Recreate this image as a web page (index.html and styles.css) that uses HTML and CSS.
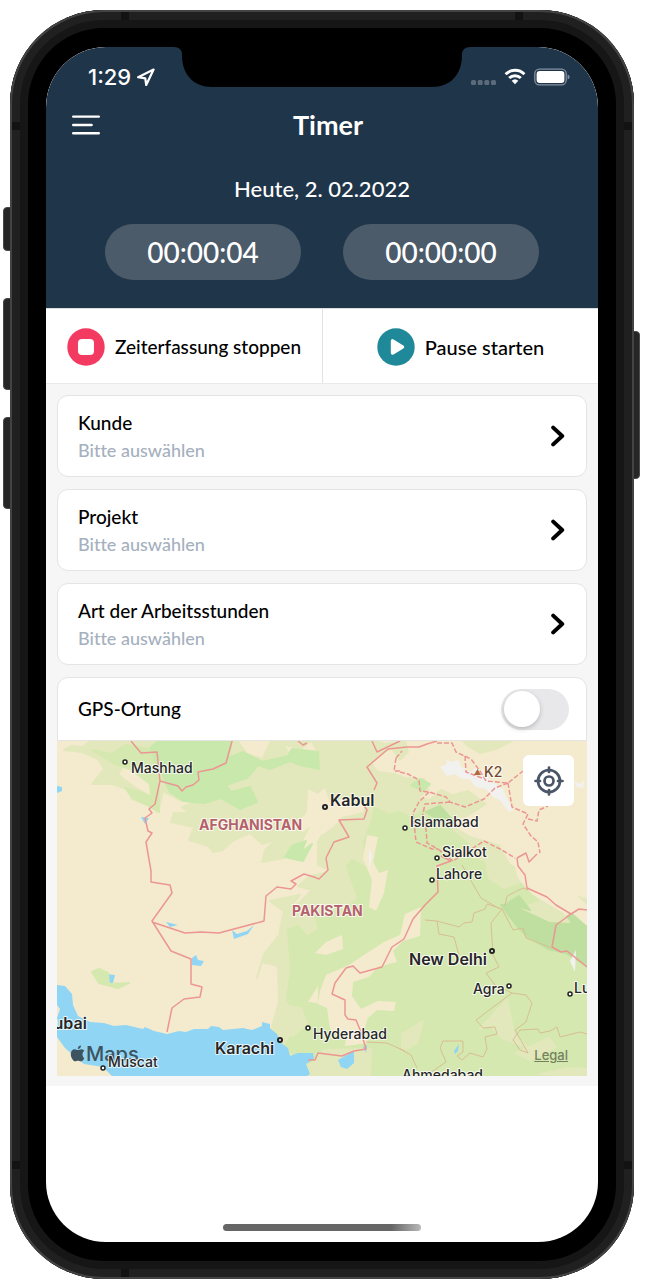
FILE: index.html
```html
<!DOCTYPE html>
<html lang="de">
<head>
<meta charset="utf-8">
<meta name="viewport" content="width=device-width, initial-scale=1">
<title>Timer</title>
<link rel="stylesheet" href="styles.css">
</head>
<body>
<div class="device">
  <span class="key key-mute"></span>
  <span class="key key-up"></span>
  <span class="key key-down"></span>
  <span class="key key-power"></span>
  <span class="band band-top band-start"></span>
  <span class="band band-top band-end"></span>
  <span class="band band-left band-upper"></span>
  <span class="band band-left band-lower"></span>
  <span class="band band-right band-upper"></span>
  <span class="band band-right band-lower"></span>
  <span class="band band-bottom band-start"></span>

  <div class="screen">
    <svg class="notch" viewBox="0 0 296 40" aria-hidden="true"><path d="M0 0Q8 0 8 8C8 28 20 40 38 40H258C276 40 288 28 288 8Q288 0 296 0Z"/></svg>

    <header class="header">
      <div class="status">
        <span class="clock">1:29
          <svg width="18" height="18" viewBox="0 0 18 18" aria-hidden="true"><path d="M1.100 9.200 16.600 1.600 9.200 17 8.300 10.300Z" fill="none" stroke="#fff" stroke-width="2.200" stroke-linejoin="round"/></svg>
        </span>
        <span class="signals">
          <svg width="25" height="18" viewBox="0 0 25 18" aria-hidden="true"><g fill="#5b6b7b"><rect y="12" width="5" height="5" rx="1.5"/><rect x="6.7" y="12" width="5" height="5" rx="1.5"/><rect x="13.3" y="12" width="5" height="5" rx="1.5"/><rect x="20" y="12" width="5" height="5" rx="1.5"/></g></svg>
          <svg width="22" height="18" viewBox="0 0 22 18" aria-hidden="true"><g fill="none" stroke="#fff" stroke-width="3"><path d="M1.6 6.2a13.4 13.4 0 0 1 18.8 0"/><path d="M5.2 10a8.4 8.4 0 0 1 11.6 0"/></g><path d="M7.7 12.7a4.8 4.8 0 0 1 6.6 0L11 16.2Z" fill="#fff"/></svg>
          <svg width="36" height="18" viewBox="0 0 36 18" aria-hidden="true"><rect x=".8" y="1.2" width="31.4" height="15.6" rx="4.6" fill="none" stroke="#8491a0" stroke-width="1.3"/><rect x="2.6" y="3" width="27.8" height="12" rx="3" fill="#fff"/><path d="M33.6 6.4q2 .9 2 2.6t-2 2.6Z" fill="#8491a0"/></svg>
        </span>
      </div>
      <div class="titlebar">
        <button class="menu" type="button" aria-label="Menü"><svg width="28" height="20" viewBox="0 0 28 20" aria-hidden="true"><path d="M1.2 1.6H26.8M1.2 10H19.6M1.2 18.3H26.8" stroke="#fff" stroke-width="2.4" stroke-linecap="round"/></svg></button>
        <h1 class="title">Timer</h1>
      </div>
      <p class="date">Heute, 2. 02.2022</p>
      <div class="timers">
        <span class="timer">00:00:04</span>
        <span class="timer">00:00:00</span>
      </div>
    </header>

    <div class="actions">
      <button class="action" type="button"><svg width="38" height="38" viewBox="0 0 38 38" aria-hidden="true"><circle cx="19" cy="19" r="18.7" fill="#f33b62"/><rect x="11" y="11" width="16" height="16" rx="4" fill="#fff"/></svg><span class="action-label">Zeiterfassung stoppen</span></button>
      <button class="action" type="button"><svg width="38" height="38" viewBox="0 0 38 38" aria-hidden="true"><circle cx="19" cy="19" r="18.7" fill="#1f8999"/><path d="M15.6 13v12l9.8-6Z" fill="#fff" stroke="#fff" stroke-width="3.6" stroke-linejoin="round"/></svg><span class="action-label wide">Pause starten</span></button>
    </div>

    <main class="content">
      <button class="card" type="button"><span class="texts"><span class="name">Kunde</span><span class="hint">Bitte auswählen</span></span><svg class="chevron" viewBox="0 0 14 22" aria-hidden="true"><path d="M2.2 2.6 11.2 11 2.2 19.4"/></svg></button>
      <button class="card" type="button"><span class="texts"><span class="name">Projekt</span><span class="hint">Bitte auswählen</span></span><svg class="chevron" viewBox="0 0 14 22" aria-hidden="true"><path d="M2.2 2.6 11.2 11 2.2 19.4"/></svg></button>
      <button class="card" type="button"><span class="texts"><span class="name">Art der Arbeitsstunden</span><span class="hint">Bitte auswählen</span></span><svg class="chevron" viewBox="0 0 14 22" aria-hidden="true"><path d="M2.2 2.6 11.2 11 2.2 19.4"/></svg></button>

      <section class="location">
        <div class="gps">
          <label class="name" for="gps">GPS-Ortung</label>
          <input class="switch" id="gps" type="checkbox" role="switch">
        </div>
        <div class="map-frame">
          <svg class="map" viewBox="57 741 530 335" preserveAspectRatio="xMidYMid slice" role="img" aria-label="Karte">
            <rect class="sand" x="57" y="741" width="530" height="335"/>
            <!-- Dry grassland of Khorasan and northern Afghanistan -->
            <path class="grass" d="M64 750 72 746 83 747 90 741H374L385 744 405 741 408 752 398 762 389 772 405 778 424 779 428 790 418 798 430 800 441 790 455 797 470 800 460 812 452 826 470 837 500 846 520 862 523 880 506 893 462 900 400 890 370 860 352 853 342 856 335 872 318 865 318 842 325 829 339 823 336 815 322 818 309 827 300 844 284 858 262 862 265 850 276 840 262 844 250 833 232 841 223 850 213 852 209 846 189 840 194 827 171 822 174 813 190 813 182 807 198 801 180 800 163 791 158 812 146 804 132 799 127 789 112 784 92 784 104 769 98 759 82 752Z"/>
            <path class="sand" d="M127 764 150 767 158 785 150 795 136 787 119 774ZM239 741 270 741 262 758 247 753ZM285 746 301 750 311 742 318 754 296 761ZM308 789 318 794 325 788 330 803 347 797 353 802 365 804 363 812 342 817 333 827 322 835 309 827 303 832 294 827 307 812ZM372 763 391 749 401 763 393 773 378 771Z"/>
            <path class="lush" d="M158 741 232 741 228 758 243 752 262 762 288 756 292 749 318 752 319 769 300 765 290 761 270 769 258 765 247 778 226 785 231 792 250 787 257 802 240 809 221 798 204 803 183 801 170 792 164 780 161 766 151 759 141 756ZM285 857 292 846 306 841 301 852 312 844 303 861ZM411 785 421 779 430 784 423 791Z"/>
            <path class="meadow" d="M92 750 111 754 126 745 149 749 158 778 159 812 145 804 133 798 125 788 140 792 151 797 150 784 132 770 113 763Z"/>

            <!-- Indus valley and the plains of India -->
            <path class="grass" d="M257 978 264 954 279 935 283 914 300 902 312 890 298 886 310 876 329 872 344 858 374 844 590 900V1080H300L288 1052 272 1027 279 1002 278 966 262 962Z"/>
            <path class="meadow" d="M375 808 388 815 399 812 411 818 424 810 434 816 443 815 452 831 467 843 473 858 484 862 492 876 512 882 535 887 553 905 590 930V1080H322L318 1066 300 1059 285 1046 293 1033 304 1024 287 1000 291 970 288 930 298 926 307 937 319 929 315 915 330 907 342 911 358 899 347 866 352 860 367 868 364 842 371 823Z"/>
            <path class="sand" d="M367 835 378 837 373 862 379 873 388 870 384 893 376 911 369 907 372 880 363 859ZM342 935 326 942 315 953 326 955 343 949ZM405 914 400 935 384 942 370 951 349 965 326 975 320 991 318 1004 327 1008 330 1029 346 1036 345 1046 368 1043 364 1030 368 1018 377 1010 394 1011 396 1002 378 1001 361 1009 352 996 353 982 369 977 378 967 397 962 393 951 403 941 420 936 421 907ZM308 1002 318 986 318 1003Z"/>
            <path class="grass" d="M324 1050 371 1049 370 1076H310V1065ZM287 1006 301 1008 307 1024 293 1036 280 1030ZM402 1034 423 1021 417 1043 402 1051ZM480 1029 507 999 514 1034 528 1048 502 1038 490 1025ZM516 1053 549 1038 556 1047 530 1060ZM540 1074 569 1068 587 1069V1076ZM317 880 345 869 343 887 322 892ZM270 901 300 895 286 913Z"/>
            <!-- Himalaya -->
            <path class="sand" d="M500 846 535 854 549 870 587 905V925L567 917 549 906 532 894 520 881Z"/>
            <path class="forest" d="M501 905 519 903 537 910 558 921 572 914 590 930V968L566 953 548 949 528 937 517 926Z"/>
            <path class="grass" d="M522 908 541 901 562 913 569 922 550 921ZM463 741H512L496 749 480 753 468 746ZM440 799 468 791 486 804 465 817 448 815ZM484 850 499 858 514 867 518 883 504 888 489 878Z"/>
            <path class="forest" d="M426 812 440 806 454 822 447 825ZM508 903 519 896 530 910Z"/>
            <path class="snow" d="M440 767 447 764 446 760 453 762 458 760 461 767 471 772 476 768 486 772 489 779 503 789 506 797 513 810 509 812 500 800 493 797 486 789 476 787 469 779 462 779 455 774 447 776ZM574 781 580 784 584 780 583 788 577 787ZM570 961 576 950 575 972ZM369 849 372 855 369 869Z"/>

            <!-- Gulf, Arabian Sea and lakes -->
            <path class="water" d="M57 985 65 986 72 994 73 1005 78 1016 90 1022 104 1023 114 1026 126 1025 143 1029 145 1027 154 1031 167 1034 179 1031 186 1032 194 1029 208 1029 211 1026 219 1027 223 1030 243 1028 252 1030 262 1026 262 1022 270 1024 270 1028 277 1034 281 1043 288 1048 290 1056 298 1053 313 1053 314 1059 306 1064 310 1074 307 1076H57Z"/>
            <path class="sand" d="M57 1037 65 1048 75 1057 84 1064 103 1067 112 1076H57ZM57 1005 60 1009 57 1018Z"/>
            <path class="water" d="M57 786 62 787 62 791 57 793ZM141 817 149 818 145 824ZM107 974 115 975 113 983 107 985ZM192 958 196 955 198 960 204 961 201 966 192 965ZM166 922 178 925 170 927ZM232 930 237 934 247 931 254 925 248 934 234 939ZM338 1060 354 1051 354 1063 347 1069 341 1067ZM363 1047 367 1045 366 1053ZM454 1051 459 1044 458 1051 455 1054Z"/>
            <path class="meadow" d="M92 972 99 969 108 973 109 984 129 983 118 988 99 983Z"/>

            <!-- Indian state lines -->
            <path class="state" d="M425 920 437 921 439 934 454 937 459 955M437 921 459 927 464 923 472 922 474 913 485 909 487 904 502 909 491 923 493 955 499 967 486 973 495 985 512 993 476 1020 483 1028 495 1027 497 1034 485 1037 487 1049 483 1057 470 1053 462 1060 457 1056 463 1052 463 1041 443 1041 440 1048 446 1062 430 1073M512 993 526 995 532 1003 526 1022 515 1030 528 1053 520 1050 513 1040 520 1030 538 1029 540 1033 550 1031 557 1027 560 1037 580 1032 587 1034M502 909 513 930 523 928 526 938 552 948M400 1049 411 1055 417 1068M462 865 481 898 500 909M505 906 507 896 523 888 528 890M366 1042 387 1043 405 1051"/>

            <!-- International borders -->
            <path class="border" d="M131 741 141 753 157 752 160 781 155 804 149 809 152 813 145 818 148 831 152 833 146 842 151 871V882L170 885 172 893 152 921 171 951 191 959V984L202 987 200 997 184 999 172 1008 167 1032"/>
            <path class="border" d="M160 781 178 786 182 791 186 787 193 785 199 780 198 772 213 769 226 763 232 741M152 922 185 933 201 932 219 933 264 921 266 896 277 887 291 889 296 884 291 881 304 874 314 877 319 879 328 870 326 858 334 842 349 837 339 820 364 819 367 810 363 804M374 790 377 783 367 767 388 749 407 747 419 747 427 744 437 741M372 741 377 752 400 741M298 741 303 745 307 743"/>
            <path class="border" d="M425 905 413 919 404 939 392 947 382 967 360 973 353 966 346 968 335 983 332 994 345 1000 345 1015 348 1019 356 1020 361 1032 366 1049 354 1051 342 1056 318 1053 315 1060 308 1060M425 905 438 892 437 866 451 861 441 856M552 947 556 925 571 914 556 905M571 914 579 909 587 910M552 947 561 952 567 951 587 967M517 858 526 853 529 862 537 854M517 858 518 866 525 875 527 888 547 897 556 905"/>
            <path class="border dashed" d="M437 743H452L456 752 471 759 480 771 486 781 508 783 523 771M465 756 466 772 482 778M400 772 408 774 419 780 420 791 429 792 446 797 450 802 465 807 484 799 495 788 508 783M429 792 419 802 413 813 416 842 432 849 438 849M450 802 425 804 422 818 426 829 427 843 438 849M508 783 512 807 528 814 523 824 531 836 538 842 540 853M528 819 537 821 539 810 548 806M438 849 453 861 484 841 502 850 515 858M396 758 394 771H400M396 758 402 751"/>

            <g class="dot">
              <circle cx="125" cy="762" r="2"/><circle class="large" cx="325" cy="807" r="2"/><circle cx="405" cy="828" r="2"/><circle cx="437" cy="858" r="2"/><circle cx="432" cy="880" r="2"/><circle class="large" cx="492" cy="951" r="2"/><circle cx="509" cy="986" r="2"/><circle cx="570" cy="994" r="2"/><circle class="large" cx="280" cy="1040" r="2"/><circle cx="308" cy="1028" r="2"/>
            </g>
            <path fill="#b06b37" d="M477.500 769 481 775H474Z"/>
            <g class="country"><text x="199" y="830">AFGHANISTAN</text><text x="292" y="916">PAKISTAN</text></g>
            <g class="city">
              <text x="131" y="773">Mashhad</text>
              <text x="410" y="827">Islamabad</text>
              <text x="442" y="857">Sialkot</text>
              <text x="436" y="879">Lahore</text>
              <text x="473" y="994">Agra</text>
              <text x="574" y="993">Lucknow</text>
              <text x="313" y="1039">Hyderabad</text>
              <text x="402" y="1080">Ahmedabad</text>
              <text class="peak" x="484" y="777">K2</text>
            </g>
            <g class="city capital">
              <text x="330" y="806">Kabul</text>
              <text x="409" y="965">New Delhi</text>
              <text x="215" y="1054">Karachi</text>
              <text x="42" y="1029">Dubai</text>
            </g>
            <g fill="#3d5360">
              <path d="M81 1045.500c.1 1.900-1.300 3.500-3.200 3.500-.2-1.800 1.300-3.400 3.200-3.500ZM84.300 1058.200c-1.200 2.300-2.300 3.100-3.600 3.100-.9 0-1.600-.6-2.700-.6-1.200 0-1.900.6-2.800.6-1.900 0-4.400-3.800-4.400-7.100 0-3.100 1.900-4.900 4-4.900 1.300 0 2.300.8 3.100.8.900 0 2-.9 3.600-.9 1.300.1 2.300.7 2.900 1.600-2.700 1.800-2.300 5.600-.1 7.400Z"/>
              <text class="brand" x="86" y="1061">Maps</text>
            </g>
            <g class="city"><text x="108" y="1067">Muscat</text></g>
            <g class="dot"><circle cx="103" cy="1068" r="2"/></g>
          </svg>
          <button class="locate" type="button" aria-label="Standort"><svg width="32" height="32" viewBox="0 0 32 32" aria-hidden="true"><g fill="none" stroke="#4a5568" stroke-width="2.700" stroke-linecap="round"><circle cx="16" cy="16" r="11"/><circle cx="16" cy="16" r="4.500"/><path d="M16 2.500V7M16 25V29.500M2.500 16H7M25 16H29.500"/></g></svg></button>
          <a class="legal" href="#legal">Legal</a>
        </div>
      </section>
    </main>
    <div class="home"></div>
  </div>
</div>
</body>
</html>
```
FILE: styles.css
```css
* { box-sizing: border-box; }
body {
  display: flex;
  min-height: 100vh;
  margin: 0;
  padding: 10px 12px 8px 10px;
  background: #fff;
  color: #000;
  font-family: Lato, sans-serif;
  font-weight: 500;
  font-variant-ligatures: none;
}
button { border: 0; padding: 0; background: none; color: inherit; font: inherit; font-variant-ligatures: none; cursor: pointer; }

/* Phone body */
.device {
  position: relative;
  display: flex;
  flex: 1;
  padding: 37px 36px;
  border-radius: 94px;
  background: #000;
  box-shadow: inset 0 0 0 2px #434343, inset 0 0 0 10px #202020, inset 0 0 0 18px #161616;
}
.key { position: absolute; z-index: -1; width: 8px; background: #262626; border: 1px solid #4a4a4a; }
.key-mute, .key-up, .key-down { left: -7px; border-radius: 4px 0 0 4px; }
.key-mute { top: 197px; height: 44px; }
.key-up { top: 288px; height: 92px; }
.key-down { top: 407px; height: 92px; }
.key-power { top: 321px; right: -6px; height: 148px; border-radius: 0 4px 4px 0; }
.band { position: absolute; width: 8px; height: 8px; background: #121212; }
.band-top { top: 2px; }
.band-bottom { bottom: 2px; }
.band-left { left: 2px; }
.band-right { right: 2px; }
.band-start { left: 111px; }
.band-end { right: 111px; }
.band-upper { top: 112px; }
.band-lower { bottom: 110px; }

.screen {
  position: relative;
  display: flex;
  flex: 1;
  flex-direction: column;
  min-width: 0;
  overflow: hidden;
  border-radius: 60px;
  background: #fff;
}
.notch { position: absolute; top: 0; left: 50%; width: 296px; height: 40px; margin-left: -148px; }

/* Header */
.header { padding: 16px 26px 28px; border-radius: 60px 60px 0 0; background: #1f354a; color: #fff; text-align: center; }
.status { display: flex; align-items: center; justify-content: space-between; height: 28px; padding: 0 2px 0 16px; }
.clock { display: flex; align-items: center; gap: 6px; font: 500 22px/28px Inter, sans-serif; }
.signals { display: flex; align-items: center; gap: 8px; }
.titlebar { display: grid; grid-template-columns: 28px 1fr 16px; align-items: center; height: 68px; }
.menu { display: flex; }
.title { margin: 0; font-size: 27px; line-height: 32px; font-weight: 700; }
.date { margin: 16px 0 22px; font-size: 22px; line-height: 27px; }
.timers { display: flex; justify-content: center; gap: 42px; }
.timer { width: 196px; border-radius: 28px; background: #4b5b6a; font-size: 28px; line-height: 56px; }

/* Timer actions */
.actions { display: grid; grid-template-columns: 1fr 1fr; height: 76px; border-top: 1px solid #ddd; border-bottom: 1px solid #e9e9e9; }
.action { display: flex; align-items: center; justify-content: center; gap: 10px; padding-top: 2px; }
.action + .action { border-left: 1px solid #e2e2e2; }
.action-label { font-size: 19px; line-height: 24px; }
.action-label.wide { font-size: 20px; }

/* Form cards */
.content { display: flex; flex-direction: column; gap: 12px; padding: 11px 11px 10px; background: #f6f6f6; }
.card {
  display: flex;
  align-items: center;
  justify-content: space-between;
  height: 82px;
  padding: 0 21px 0 20px;
  border: 1px solid #e4e4e4;
  border-radius: 11px;
  background: #fff;
  text-align: left;
}
.texts { display: flex; flex-direction: column; gap: 3px; }
.name { font-size: 19px; line-height: 24px; }
.hint { color: #a5b0be; font-size: 18px; line-height: 24px; }
.chevron { width: 14px; height: 22px; fill: none; stroke: #000; stroke-width: 4; stroke-linecap: round; stroke-linejoin: round; }
.gps {
  display: flex;
  align-items: center;
  justify-content: space-between;
  height: 64px;
  padding: 0 17px 0 20px;
  border: 1px solid #e4e4e4;
  border-radius: 11px 11px 0 0;
  background: #fff;
}
.switch {
  appearance: none;
  width: 68px;
  height: 41px;
  margin: 0;
  padding: 2px 3px;
  border-radius: 21px;
  background: #e8e8ea;
}
.switch::before {
  display: block;
  width: 36px;
  height: 36px;
  border-radius: 50%;
  background: #fff;
  box-shadow: 0 2px 5px #0003;
  content: "";
}
.switch:checked { background: #1f8999; }
.switch:checked::before { margin-left: auto; }

/* Map */
.map-frame { position: relative; overflow: hidden; }
.map { display: block; width: 100%; height: 335px; }
.sand { fill: #f4ebcf; }
.grass { fill: #e2e8bb; stroke: #e2e8bb; }
.meadow { fill: #d5e8af; stroke: #d5e8af; }
.lush { fill: #c8e8ac; stroke: #c8e8ac; }
.forest { fill: #bfdfa0; stroke: #bfdfa0; }
.grass, .meadow, .lush, .forest { stroke-width: 2; stroke-linejoin: round; }
.snow { fill: #f1f1ef; }
.water { fill: #90d5f3; }
.state { fill: none; stroke: #d8be93; stroke-width: 1; }
.border { fill: none; stroke: #ec9693; stroke-width: 1.5; stroke-linejoin: round; }
.dashed { stroke-dasharray: 5 2; }
.dot { fill: #fff; stroke: #222; stroke-width: 1.5; }
.large { stroke-width: 2; }
.city { fill: #262626; stroke: #fffc; stroke-width: 2px; stroke-linejoin: round; paint-order: stroke; font: 500 14px Inter, sans-serif; }
.capital { font-size: 16px; font-weight: 600; }
.country { fill: #b5616a; stroke: #fffc; stroke-width: 2px; paint-order: stroke; font: 700 14px Inter, sans-serif; }
.peak { fill: #70482b; }
.brand { font: 500 20px Inter, sans-serif; }
.locate {
  position: absolute;
  top: 14px;
  right: 13px;
  display: grid;
  place-items: center;
  width: 51px;
  height: 51px;
  border-radius: 6px;
  background: #fff;
}
.legal { position: absolute; right: 19px; bottom: 13px; color: #76805f; font: 500 13px/16px Inter, sans-serif; }

.home { width: 198px; height: 7px; margin: auto auto 11px; border-radius: 4px; background: linear-gradient(90deg, #666 85%, #b8b8b8); }
```
